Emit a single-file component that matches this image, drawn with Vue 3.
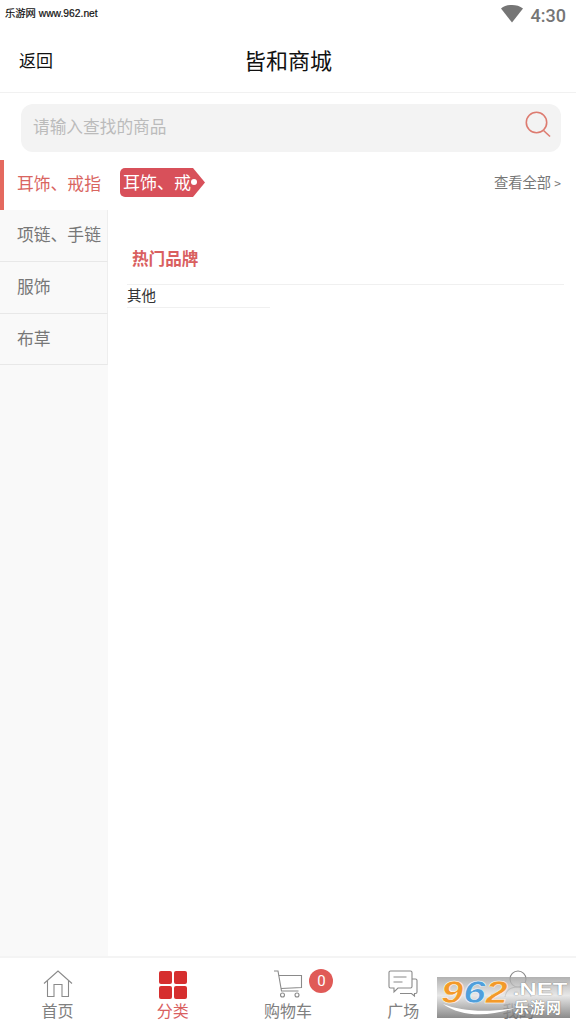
<script setup>
const cats = ['耳饰、戒指', '项链、手链', '服饰', '布草']
</script>

<template>
  <div class="page">
    <div class="status">
      <span class="mark">乐游网 www.962.net</span>
      <div class="status-right">
        <svg width="22" height="18" viewBox="0 0 22 18"><path d="M0 3.500C3 1 7 0 11 0s8 1 11 3.500L11 17.500z" fill="#757575"/></svg>
        <span class="time">4:30</span>
      </div>
    </div>

    <header class="header">
      <span class="back">返回</span>
      <span class="title">皆和商城</span>
    </header>

    <div class="search-wrap">
      <div class="search">
        <span class="placeholder">请输入查找的商品</span>
        <svg class="search-ic" width="26" height="28" viewBox="0 0 26 28" fill="none" stroke="#dd7b70" stroke-width="1.6">
          <circle cx="11.500" cy="11.500" r="10.200"/>
          <path d="M18.500 19.500l6.500 6"/>
        </svg>
      </div>
    </div>

    <div class="main">
      <aside class="side">
        <div v-for="(c, i) in cats" :key="c" class="side-item" :class="{ active: i === 0 }"><span>{{ c }}</span></div>
      </aside>
      <section class="content">
        <div class="cat-row">
          <div class="tag">耳饰、戒<i class="dot"></i></div>
          <span class="all">查看全部 <small>&gt;</small></span>
        </div>
        <h3 class="hot">热门品牌</h3>
        <div class="brands">
          <div class="brand">其他</div>
        </div>
      </section>
    </div>

    <nav class="tabs">
      <div class="tab">
        <svg width="30" height="28" viewBox="0 0 30 28" fill="none" stroke="#8a8a8a" stroke-width="1.100">
          <path d="M1 13.500L15 1l14 12.500"/>
          <path d="M4.500 11v15.500h6.500v-12h8v12h6.500V11"/>
        </svg>
        <span>首页</span>
      </div>
      <div class="tab on">
        <div class="grid-ic"><i></i><i></i><i></i><i></i></div>
        <span>分类</span>
      </div>
      <div class="tab">
        <svg width="30" height="28" viewBox="0 0 30 28" fill="none" stroke="#8a8a8a" stroke-width="1.100">
          <path d="M1 1h4l3.500 20h17"/>
          <path d="M5.800 5.500H28.500v12L8 18.500"/>
          <circle cx="9.500" cy="25" r="2"/>
          <circle cx="24" cy="25" r="2"/>
        </svg>
        <span>购物车</span>
        <b class="badge">0</b>
      </div>
      <div class="tab">
        <svg width="30" height="28" viewBox="0 0 30 28" fill="none" stroke="#8a8a8a" stroke-width="1.100">
          <path d="M2.500 1h20a1.500 1.500 0 0 1 1.500 1.500v14a1.500 1.500 0 0 1-1.500 1.500H10l-4 4v-4H2.500A1.500 1.500 0 0 1 1 16.500v-14A1.500 1.500 0 0 1 2.500 1z"/>
          <path d="M5.500 7h13M5.500 12h9"/>
          <path d="M24 9h3.500a1.500 1.500 0 0 1 1.500 1.500V22a1.500 1.500 0 0 1-1.500 1.500h-1v2.500l-3-2.500H12"/>
        </svg>
        <span>广场</span>
      </div>
      <div class="tab">
        <svg width="30" height="28" viewBox="0 0 30 28" fill="none" stroke="#8a8a8a" stroke-width="1.100">
          <circle cx="15" cy="9" r="8"/>
          <path d="M2 27c1-7 6-10 13-10s12 3 13 10"/>
        </svg>
        <span>我的</span>
      </div>
    </nav>

    <div class="wm">
      <span class="wm-num"><em class="o">9</em><em class="b">6</em><em class="o">2</em></span>
      <span class="wm-net">.NET</span>
      <span class="wm-cn">乐游网</span>
      <svg class="wm-swoosh" width="72" height="14" viewBox="0 0 72 14"><path d="M0 1C18 8 42 10 72 5 46 14 18 14 0 1z" fill="#fff"/></svg>
    </div>
  </div>
</template>

<style>
html, body { margin: 0; background: #fff; }
</style>

<style scoped>
.page {
  position: relative;
  width: 576px;
  height: 1024px;
  overflow: hidden;
  display: flex;
  flex-direction: column;
  background: #fff;
  font-family: "Noto Sans CJK SC", "Liberation Sans", sans-serif;
}

.status {
  height: 30px;
  flex: none;
  display: flex;
  justify-content: space-between;
  align-items: flex-start;
  padding: 0 10px 0 5px;
}
.mark {
  margin-top: 6px;
  font-size: 10.300px;
  line-height: 15px;
  color: #111;
  -webkit-text-stroke: 0.2px #111;
  font-family: "Liberation Sans", "Noto Sans CJK SC", sans-serif;
}
.status-right {
  display: flex;
  align-items: flex-start;
  gap: 8px;
  padding-top: 5px;
}
.time {
  font-family: Roboto, sans-serif;
  font-weight: 500;
  font-size: 18px;
  line-height: 21px;
  color: #757575;
}

.header {
  height: 63px;
  flex: none;
  display: flex;
  align-items: center;
  position: relative;
  padding: 0 0 3px 19px;
  box-sizing: border-box;
  border-bottom: 1px solid #f1f1f1;
}
.back { font-size: 17px; color: #111; }
.title {
  position: absolute;
  left: 0;
  right: 0;
  top: 13px;
  line-height: 32px;
  text-align: center;
  font-size: 22px;
  color: #111;
}

.search-wrap {
  flex: none;
  padding: 11px 15px 8px 21px;
}
.search {
  height: 48px;
  box-sizing: border-box;
  border-radius: 12px;
  background: #f3f3f3;
  display: flex;
  align-items: center;
  justify-content: space-between;
  padding: 0 10px 4px 12px;
}
.placeholder { font-size: 16.700px; color: #bbb; }
.search-ic { margin-bottom: 2px; }

.main {
  flex: 1;
  display: flex;
  min-height: 0;
}
.side {
  width: 108px;
  flex: none;
  background: #f9f9f9;
}
.side-item {
  box-sizing: border-box;
  height: 52px;
  padding: 0 0 3px 17px;
  display: flex;
  align-items: center;
  font-size: 16.800px;
  white-space: nowrap;
  color: #777;
  border-right: 1px solid #eee;
  border-bottom: 1px solid #e8e8e8;
}
.side-item:last-child { height: 51px; }
.side-item.active {
  height: 50px;
  background: #fff;
  color: #d9655f;
  border-left: 4px solid #e4695f;
  border-right: 0;
  border-bottom: 0;
  padding-left: 13px;
  padding-bottom: 4px;
}

.content {
  flex: 1;
  min-width: 0;
  padding: 8px 12px 0 12px;
}
.cat-row {
  display: flex;
  justify-content: space-between;
  align-items: center;
  height: 29px;
}
.tag {
  position: relative;
  box-sizing: border-box;
  width: 73px;
  height: 29px;
  margin-right: 12px;
  padding-left: 3px;
  border-radius: 5px 0 0 5px;
  background: #d8505a;
  color: #fff;
  font-size: 17px;
  line-height: 27px;
  white-space: nowrap;
}
.tag::after {
  content: "";
  position: absolute;
  left: 73px;
  top: 0;
  width: 12px;
  height: 29px;
  background: #d8505a;
  clip-path: polygon(0 0, 100% 50%, 0 100%);
}
.dot {
  position: absolute;
  left: 71px;
  top: 11px;
  width: 6px;
  height: 6px;
  border-radius: 50%;
  background: #fff;
  z-index: 1;
}
.all {
  font-size: 14.300px;
  color: #777;
  margin: 0 3px 3px 0;
}
.all small { font-size: 12px; }
.hot {
  margin: 47px 0 0 12px;
  font-size: 16.600px;
  line-height: 28px;
  font-weight: 700;
  color: #d9605f;
}
.brands {
  margin: 12px 0 0 7px;
  width: 437px;
  border-top: 1px solid #f0f0f0;
}
.brand {
  width: 143px;
  height: 22px;
  line-height: 20px;
  font-size: 14.500px;
  color: #333;
  border-bottom: 1px solid #f0f0f0;
}

.tabs {
  height: 68px;
  flex: none;
  display: grid;
  grid-template-columns: repeat(5, 1fr);
  box-sizing: border-box;
  border-top: 2px solid #f4f4f4;
  background: #fff;
}
.tab {
  position: relative;
  display: flex;
  flex-direction: column;
  align-items: center;
  padding-top: 12px;
  color: #808080;
  font-size: 16px;
  line-height: 22px;
}
.tab span { margin-top: 1px; }
.tab.on { color: #d9605f; }
.grid-ic {
  width: 28px;
  height: 28px;
  margin: 1px 0 -1px 0;
  display: grid;
  grid-template-columns: 13px 13px;
  grid-auto-rows: 13px;
  gap: 2px;
}
.grid-ic i {
  background: #d62f2f;
  border-radius: 2px;
}
.badge {
  position: absolute;
  left: 79px;
  top: 11px;
  width: 24px;
  height: 24px;
  border-radius: 50%;
  background: #e05a57;
  color: #fff;
  font: 400 15px/24px Roboto, sans-serif;
  text-align: center;
}

.wm {
  position: absolute;
  left: 437px;
  top: 977px;
  width: 133px;
  height: 41px;
  background: linear-gradient(#9e9e9ecc, #e2e2e2cc 45%, #6e6e6ecc);
  font-family: "Liberation Sans", sans-serif;
}
.wm-num {
  position: absolute;
  left: 4px;
  top: 0;
  font-size: 32px;
  line-height: 30px;
  font-weight: 700;
  font-style: italic;
  transform: scaleX(1.250);
  transform-origin: 0 0;
  -webkit-text-stroke: 0.5px #fff;
}
.wm-num em { font-style: inherit; }
.o { color: #f39a2a; }
.b { color: #4f9fdc; }
.wm-net {
  position: absolute;
  left: 76px;
  top: 3px;
  font-size: 17px;
  line-height: 20px;
  font-weight: 700;
  color: #fff;
  transform: scaleX(1.400);
  transform-origin: 0 0;
  text-shadow: 0 0 1px #555;
}
.wm-cn {
  position: absolute;
  left: 77px;
  top: 20px;
  font-family: "Noto Sans CJK SC", sans-serif;
  font-size: 15px;
  line-height: 20px;
  font-weight: 700;
  letter-spacing: 1px;
  color: #fff;
  text-shadow: 0 0 1px #444;
}
.wm-swoosh {
  position: absolute;
  left: 6px;
  top: 26px;
}
</style>
